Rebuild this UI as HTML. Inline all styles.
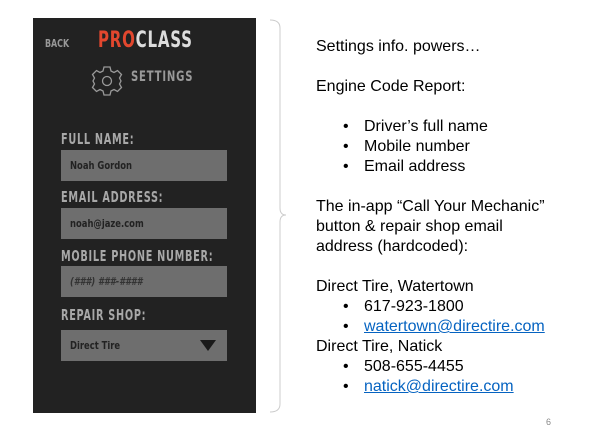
<!DOCTYPE html>
<html><head><style>
body{margin:0;width:596px;height:442px;background:#fff;position:relative;overflow:hidden;font-family:"Liberation Sans",sans-serif}
.ph{position:absolute;left:33px;top:18px;width:223px;height:395px;background:#222}
.c{position:absolute;font-family:"DejaVu Sans Condensed","Liberation Sans Narrow","Liberation Sans",sans-serif;font-weight:bold;color:#aaa;transform-origin:left top;white-space:nowrap}
.lab{font-size:15px;letter-spacing:1px;color:#a8a8a8;transform:scaleX(.72)}
.in{position:absolute;left:28px;width:166px;height:31px;background:#6e6e6e}
.in span{position:absolute;left:9px;top:9px;font-family:"DejaVu Sans Condensed","Liberation Sans",sans-serif;font-weight:bold;font-size:11px;color:#222;transform:scaleX(.85);transform-origin:left top;white-space:nowrap}
.t{position:absolute;left:316px;font-size:16px;color:#000;white-space:nowrap}
.b{position:absolute;left:343px;font-size:16px;white-space:nowrap}
.b i{font-style:normal;position:absolute;left:21px}
a{color:#0563c1;text-decoration:underline}
</style></head><body>
<div class="ph">
<div class="c" style="left:12px;top:19px;font-size:11px;color:#999;transform:scaleX(.8)">BACK</div>
<div class="c" style="left:65px;top:10px;font-size:22px;letter-spacing:1px;transform:scaleX(.76)"><span style="color:#e2472e">PRO</span><span style="color:#ddd">CLASS</span></div>
<svg style="position:absolute;left:58px;top:47px" width="32" height="32" viewBox="0 0 32 32"><path d="M13 2h6l1 4 3 1.5 3.5-2 4 4-2 3.5L30 16l-1.5 3 2 3.5-4 4-3.5-2-3 1.5-1 4h-6l-1-4-3-1.5-3.5 2-4-4 2-3.5L2 16l1.5-3-2-3.5 4-4 3.5 2L12 6z" fill="none" stroke="#999" stroke-width="1.3"/><circle cx="16" cy="16" r="4.5" fill="none" stroke="#999" stroke-width="1.3"/></svg>
<div class="c" style="left:98px;top:51px;font-size:14px;letter-spacing:1px;color:#999;transform:scaleX(.8)">SETTINGS</div>
<div class="c lab" style="left:28px;top:112px">FULL NAME:</div>
<div class="in" style="top:132px"><span>Noah Gordon</span></div>
<div class="c lab" style="left:28px;top:170px">EMAIL ADDRESS:</div>
<div class="in" style="top:190px"><span>noah@jaze.com</span></div>
<div class="c lab" style="left:28px;top:229px">MOBILE PHONE NUMBER:</div>
<div class="in" style="top:248px"><span style="font-style:italic;color:#333">(###) ###-####</span></div>
<div class="c lab" style="left:28px;top:288px">REPAIR SHOP:</div>
<div class="in" style="top:312px"><span>Direct Tire</span><div style="position:absolute;right:11px;top:10px;width:0;height:0;border-left:8px solid transparent;border-right:8px solid transparent;border-top:11px solid #1a1a1a"></div></div>
</div>
<svg style="position:absolute;left:268px;top:18px" width="20" height="398"><path d="M2 2Q12 2 12 10V190Q12 197 18 197Q12 197 12 204V386Q12 394 2 394" fill="none" stroke="#ccc" stroke-width="1"/></svg>
<div class="t" style="top:38px">Settings info. powers…</div>
<div class="t" style="top:78px">Engine Code Report:</div>
<div class="b" style="top:118px">•<i>Driver’s full name</i></div>
<div class="b" style="top:138px">•<i>Mobile number</i></div>
<div class="b" style="top:158px">•<i>Email address</i></div>
<div class="t" style="top:198px">The in-app “Call Your Mechanic”</div>
<div class="t" style="top:218px">button &amp; repair shop email</div>
<div class="t" style="top:238px">address (hardcoded):</div>
<div class="t" style="top:278px">Direct Tire, Watertown</div>
<div class="b" style="top:298px">•<i>617-923-1800</i></div>
<div class="b" style="top:318px">•<i><a>watertown@directire.com</a></i></div>
<div class="t" style="top:338px">Direct Tire, Natick</div>
<div class="b" style="top:358px">•<i>508-655-4455</i></div>
<div class="b" style="top:378px">•<i><a>natick@directire.com</a></i></div>
<div style="position:absolute;left:546px;top:417px;font-size:9px;color:#888">6</div>
</body></html>
